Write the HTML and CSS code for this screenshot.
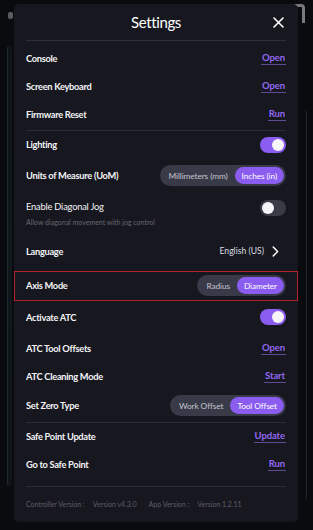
FILE: index.html
```html
<!DOCTYPE html>
<html>
<head>
<meta charset="utf-8">
<link rel="stylesheet" href="styles.css">
</head>
<body>
<div class="backdrop">
  <div class="bg-panel-left"></div>
  <div class="bg-panel-right"></div>
  <div class="bg-dot"></div>
  <div class="bg-corner"></div>
</div>
<div class="modal">
  <div class="header">
    <span class="title">Settings</span>
    <svg class="close" width="11" height="11" viewBox="0 0 11 11"><path d="M1 1L10 10M10 1L1 10" stroke="#fff" stroke-width="1.6" stroke-linecap="round"/></svg>
  </div>

  <div class="group g1">
    <div class="row"><span class="label">Console</span><a class="link">Open</a></div>
    <div class="row"><span class="label">Screen Keyboard</span><a class="link">Open</a></div>
    <div class="row"><span class="label">Firmware Reset</span><a class="link">Run</a></div>
  </div>

  <div class="group g2">
    <div class="row r-light"><span class="label">Lighting</span><span class="toggle on"><span class="knob"></span></span></div>
    <div class="row r-units"><span class="label">Units of Measure (UoM)</span>
      <span class="seg"><span class="opt">Millimeters (mm)</span><span class="opt active">Inches (in)</span></span></div>
    <div class="row r-diag">
      <div class="stack">
        <span class="label plain">Enable Diagonal Jog</span>
        <span class="sub">Allow diagonal movement with jog control</span>
      </div>
      <span class="toggle off"><span class="knob"></span></span>
    </div>
    <div class="row r-lang"><span class="label">Language</span>
      <span class="lang">English (US)
        <svg width="7" height="11" viewBox="0 0 7 11"><path d="M1.2 1L5.6 5.5L1.2 10" fill="none" stroke="#fff" stroke-width="1.5" stroke-linecap="round" stroke-linejoin="round"/></svg>
      </span></div>
    <div class="row r-axis"><span class="label">Axis Mode</span>
      <span class="seg"><span class="opt">Radius</span><span class="opt active">Diameter</span></span></div>
    <div class="row r-atc"><span class="label">Activate ATC</span><span class="toggle on"><span class="knob"></span></span></div>
    <div class="row r-offs"><span class="label">ATC Tool Offsets</span><a class="link">Open</a></div>
    <div class="row r-clean"><span class="label">ATC Cleaning Mode</span><a class="link">Start</a></div>
    <div class="row r-zero"><span class="label">Set Zero Type</span>
      <span class="seg"><span class="opt">Work Offset</span><span class="opt active">Tool Offset</span></span></div>
  </div>

  <div class="group g3">
    <div class="row"><span class="label">Safe Point Update</span><a class="link">Update</a></div>
    <div class="row"><span class="label">Go to Safe Point</span><a class="link">Run</a></div>
  </div>

  <div class="footer">
    <span class="fk">Controller Version :</span><span class="fv">Version v4.3.0</span>
    <span class="fk">App Version :</span><span class="fv">Version 1.2.11</span>
  </div>
</div>
</body>
</html>
```
FILE: styles.css
```css
* { box-sizing: border-box; }
html, body { margin: 0; padding: 0; }
body {
  width: 313px;
  height: 530px;
  background: #0a0b0f;
  font-family: Lato, "Noto Sans", sans-serif;
  color: #fff;
  overflow: hidden;
  position: relative;
  padding-top: 4px;
}
.backdrop { position: absolute; inset: 0; z-index: 0; }
.bg-panel-left {
  position: absolute; left: 7px; top: 46px; width: 5px; height: 440px;
  border-left: 1px solid #1d2a30; border-radius: 3px;
  background: linear-gradient(#0f1418, #10181c 50%, #0f1418);
}
.bg-panel-right {
  position: absolute; left: 301px; top: 110px; width: 6px; height: 390px;
  border-right: 1px solid #26262e; border-radius: 3px;
}
.bg-dot {
  position: absolute; left: 8px; top: 12px; width: 5px; height: 7px;
  border-radius: 2px; background: #5a5c60;
}
.bg-corner {
  position: absolute; left: 286px; top: 4px; width: 19px; height: 19px;
  border-top: 3px solid #7a7a7e; border-right: 3px solid #7a7a7e;
  border-radius: 0 4px 0 0;
}
.modal {
  position: relative;
  z-index: 1;
  margin-left: 14px;
  width: 284px;
  height: 518px;
  background: #16171f;
  border-radius: 5px;
  display: flex;
  flex-direction: column;
}
.header {
  height: 37px;
  margin: 0 12px;
  border-bottom: 1px solid #2e2f3a;
  display: flex;
  align-items: center;
  justify-content: center;
  position: relative;
}
.title { font-size: 15px; font-weight: 400; letter-spacing: -0.4px; }
.close { position: absolute; right: 2px; top: 13px; }

.group { margin: 0 12px 0; border-bottom: 1px solid #2a2b35; display: flex; flex-direction: column; }
.g1 { padding-top: 4px; padding-bottom: 1px; }
.g2 { padding-top: 0; }
.g3 { padding-bottom: 7px; }

.row {
  height: 28px;
  display: flex;
  align-items: center;
  justify-content: space-between;
}
.label { font-size: 9.3px; font-weight: 700; color: #f4f4f6; letter-spacing: -0.3px; }
.label.plain { font-weight: 400; letter-spacing: -0.2px; }
.link {
  font-size: 9.5px; font-weight: 700; color: #9468f2;
  border-bottom: 1px solid #5e4a96; padding: 0 1px 1px; line-height: 11px;
  letter-spacing: -0.1px;
}

.r-light { height: 28px; }
.r-units { height: 34px; }
.r-diag { height: 39px; align-items: flex-start; padding-top: 7px; }
.stack { display: flex; flex-direction: column; }
.stack .label { line-height: 14px; }
.sub { font-size: 7px; color: #666772; line-height: 16px; }
.r-lang { height: 39px; }
.r-axis {
  height: 30px;
  margin: 0 -12px;
  padding: 0 11px;
  border: 1px solid #b3242c;
}
.r-atc { height: 33px; }
.r-offs { height: 29px; }
.r-clean { height: 27px; }
.r-zero { height: 32px; }

.toggle {
  width: 26px; height: 16px; border-radius: 8px;
  display: flex; align-items: center; padding: 0 2px;
}
.toggle.on { background: #8a5cf0; justify-content: flex-end; }
.toggle.off { background: #3a3b47; justify-content: flex-start; }
.knob { width: 12px; height: 12px; border-radius: 50%; background: #f5f5f7; }

.seg {
  display: flex; align-items: center;
  height: 21px; border-radius: 11px; background: #393a48;
  padding: 0 2px;
}
.opt {
  font-size: 8.3px; color: #c4c4cc; padding: 0 7px; height: 17px;
  display: flex; align-items: center; border-radius: 9px;
  letter-spacing: -0.1px;
}
.opt.active { background: #8a5cf0; color: #fff; }

.lang { font-size: 8.6px; color: #dedee2; display: flex; align-items: center; gap: 8px; margin-right: 7px; }

.footer {
  margin: 0 12px;
  height: 36px;
  display: flex; align-items: center;
  font-size: 7px; color: #5d5e69;
}
.fk { margin-right: 8px; }
.fv { margin-right: 12px; }
```
